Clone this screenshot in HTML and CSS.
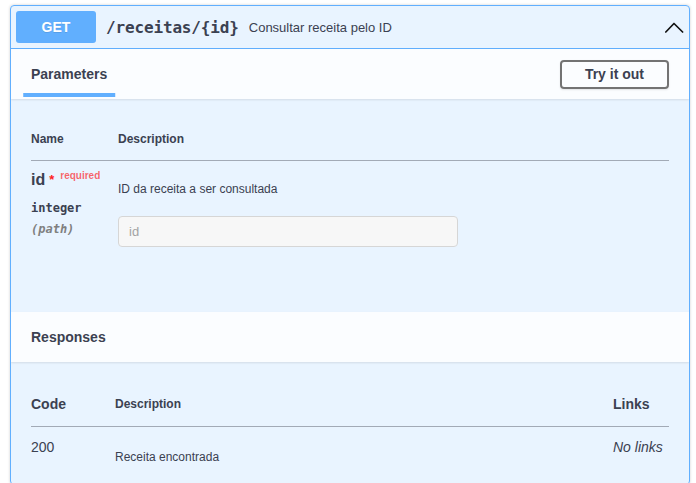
FILE: index.html
```html
<!DOCTYPE html>
<html lang="pt">
<head>
<meta charset="utf-8">
<title>GET /receitas/{id}</title>
<link rel="stylesheet" href="styles.css">
</head>
<body>
<div class="page">
  <div class="opblock">
    <div class="summary">
      <span class="method">GET</span>
      <span class="path">/receitas/{id}</span>
      <span class="summary-desc">Consultar receita pelo ID</span>
      <svg class="arrow" width="20" height="11" viewBox="0 0 20 11" aria-hidden="true">
        <polyline points="1.8,10 10,1.5 18.6,10" fill="none" stroke="#111" stroke-width="1.7" stroke-linecap="round" stroke-linejoin="round"/>
      </svg>
    </div>

    <div class="section-header">
      <h4 class="tab"><span class="tab-label">Parameters</span></h4>
      <button class="btn" type="button">Try it out</button>
    </div>

    <div class="table-container params-container">
      <table class="params">
        <thead>
          <tr>
            <th class="col-name">Name</th>
            <th>Description</th>
          </tr>
        </thead>
        <tbody>
          <tr>
            <td class="col-name">
              <div class="param-name">id<span class="star">*</span><span class="req">required</span></div>
              <div class="param-type">integer</div>
              <div class="param-in">(path)</div>
            </td>
            <td>
              <p class="markdown">ID da receita a ser consultada</p>
              <input class="param-input" type="text" placeholder="id" disabled>
            </td>
          </tr>
        </tbody>
      </table>
    </div>

    <div class="section-header">
      <h4>Responses</h4>
    </div>

    <div class="table-container responses-container">
      <table class="responses">
        <thead>
          <tr>
            <th class="col-status">Code</th>
            <th class="col-desc">Description</th>
            <th class="col-links">Links</th>
          </tr>
        </thead>
        <tbody>
          <tr>
            <td class="col-status">200</td>
            <td class="col-desc"><p class="markdown">Receita encontrada</p></td>
            <td class="col-links"><i>No links</i></td>
          </tr>
        </tbody>
      </table>
    </div>
  </div>
</div>
</body>
</html>
```

FILE: styles.css
```css
* { box-sizing: border-box; }

html, body {
  margin: 0;
  padding: 0;
  background: #ffffff;
}

body {
  font-family: "Liberation Sans", Arial, sans-serif;
  color: #3b4151;
}

.page {
  padding: 5px 6px 0 10px;
}

.opblock {
  border: 1px solid #61affe;
  border-radius: 4px;
  background: rgba(97, 175, 254, 0.14);
  box-shadow: 0 0 3px rgba(0, 0, 0, 0.19);
  overflow: hidden;
}

/* summary */
.summary {
  display: flex;
  align-items: center;
  padding: 5px;
  border-bottom: 1px solid #61affe;
}

.method {
  min-width: 80px;
  height: 32px;
  line-height: 32px;
  text-align: center;
  background: #61affe;
  color: #fff;
  border-radius: 3px;
  font-size: 14px;
  font-weight: 700;
  text-shadow: 0 1px 0 rgba(0, 0, 0, 0.1);
}

.path {
  font-family: "DejaVu Sans Mono", "Liberation Mono", monospace;
  font-size: 16px;
  font-weight: 700;
  padding: 0 10px;
  color: #3b4151;
  letter-spacing: -0.15px;
}

.summary-desc {
  flex: 1;
  font-size: 13px;
  color: #3b4151;
}

.arrow {
  display: block;
}

/* section header */
.section-header {
  display: flex;
  align-items: center;
  min-height: 50px;
  padding: 8px 20px;
  background: rgba(255, 255, 255, 0.8);
  box-shadow: 0 1px 2px rgba(0, 0, 0, 0.1);
}

.section-header h4 {
  flex: 1;
  margin: 0;
  font-size: 14px;
  line-height: 16px;
  font-weight: 700;
  color: #3b4151;
}

.tab-label {
  position: relative;
  display: inline-block;
}

.tab-label::after {
  content: "";
  position: absolute;
  left: 50%;
  bottom: -15px;
  width: 120%;
  height: 4px;
  transform: translateX(-50%);
  background: #61affe;
}

.btn {
  font-family: inherit;
  font-size: 14px;
  line-height: 15px;
  font-weight: 700;
  color: #3b4151;
  padding: 5px 23px;
  border: 2px solid #737373;
  border-radius: 4px;
  background: transparent;
  box-shadow: 0 1px 2px rgba(0, 0, 0, 0.1);
}

/* tables */
.table-container {
  padding: 20px;
}

.params-container {
  padding-bottom: 65px;
}

table {
  width: 100%;
  border-collapse: collapse;
}

th {
  text-align: left;
  font-size: 12px;
  line-height: 14px;
  font-weight: 700;
  color: #3b4151;
  padding: 13px 0 14px;
  border-bottom: 1px solid #a2aab6;
}

td {
  vertical-align: top;
  padding: 10px 0 0;
  color: #3b4151;
}

.params .col-name {
  width: 87px;
}

.param-name {
  font-size: 16px;
  line-height: 18px;
  font-weight: 700;
}

.star {
  color: #f22;
  font-size: 13px;
  font-weight: 700;
  position: relative;
  top: -1px;
  margin-left: 4px;
}

.req {
  color: rgba(255, 0, 0, 0.6);
  font-size: 10px;
  font-weight: 700;
  position: relative;
  top: -6px;
  padding-left: 6px;
}

.param-type {
  font-family: "DejaVu Sans Mono", "Liberation Mono", monospace;
  font-size: 12px;
  line-height: 14px;
  font-weight: 700;
  padding: 10px 0 7px;
}

.param-in {
  font-family: "DejaVu Sans Mono", "Liberation Mono", monospace;
  font-size: 12px;
  line-height: 14px;
  font-weight: 700;
  font-style: italic;
  color: #808080;
}

.markdown {
  margin: 11px 0 0;
  font-size: 12px;
  line-height: 14px;
}

.param-input {
  display: block;
  margin-top: 20px;
  width: 340px;
  height: 31px;
  padding: 0 10px;
  font-family: inherit;
  font-size: 13px;
  color: #3b4151;
  background: #f7f7f7;
  border: 1px solid #d6d6d6;
  border-radius: 4px;
}

.param-input::placeholder {
  color: #a3a3a3;
}

/* responses */
.responses th {
  vertical-align: middle;
  padding: 14px 0 14px;
}

.responses th.col-status,
.responses th.col-links {
  font-size: 14px;
  line-height: 16px;
}

.responses .col-status {
  width: 84px;
}

.responses .col-links {
  width: 56px;
}

.responses td {
  padding-top: 12px;
}

.responses td.col-status,
.responses td.col-links {
  font-size: 14px;
  line-height: 16px;
}
```
